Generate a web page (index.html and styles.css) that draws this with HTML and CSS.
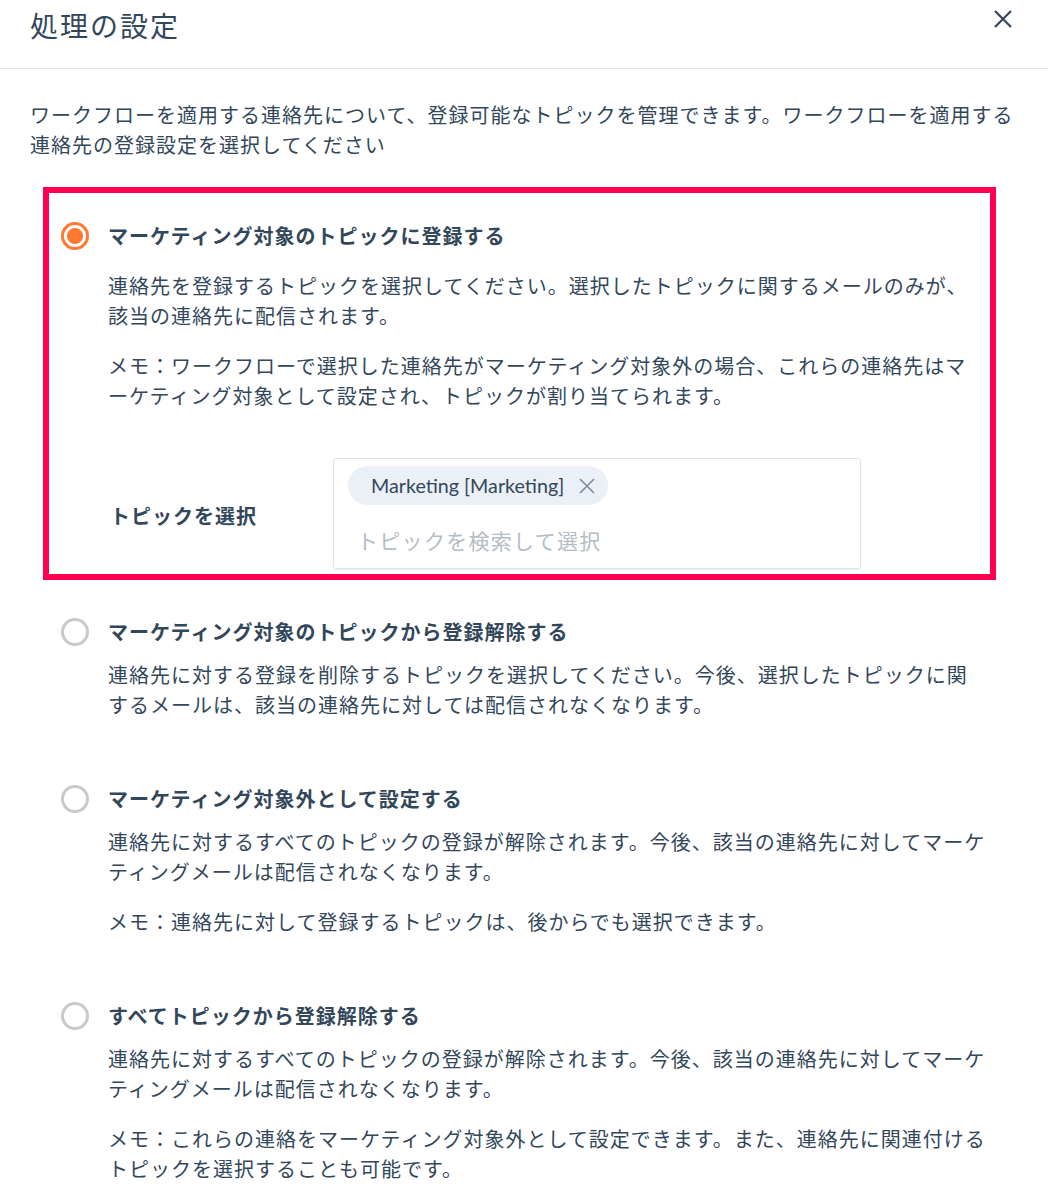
FILE: index.html
```html
<!DOCTYPE html>
<html lang="ja">
<head>
    <meta charset="UTF-8">
    <meta name="viewport" content="width=device-width, initial-scale=1.0">
    <title>処理の設定</title>
    <link rel="stylesheet" href="styles.css">
</head>
<body>
    <header class="panel-header">
        <h1>処理の設定</h1>
        <button class="close-btn" aria-label="閉じる">
            <svg width="20" height="20" viewBox="0 0 20 20">
                <path d="M2 2 L18 18 M18 2 L2 18" stroke="#33475b" stroke-width="2.2" fill="none"/>
            </svg>
        </button>
    </header>

    <main class="panel-body">
        <p class="intro">ワークフローを適用する連絡先について、登録可能なトピックを管理できます。ワークフローを適用する<br>連絡先の登録設定を選択してください</p>

        <div class="option option-selected">
            <div class="option-title">
                <span class="radio checked"></span>
                <span>マーケティング対象のトピックに登録する</span>
            </div>
            <div class="option-text">
                <p>連絡先を登録するトピックを選択してください。選択したトピックに関するメールのみが、<br>該当の連絡先に配信されます。</p>
                <p>メモ：ワークフローで選択した連絡先がマーケティング対象外の場合、これらの連絡先はマ<br>ーケティング対象として設定され、トピックが割り当てられます。</p>
            </div>
            <div class="topic-row">
                <label class="topic-label">トピックを選択</label>
                <div class="topic-input">
                    <span class="tag">
                        Marketing [Marketing]
                        <svg width="18" height="18" viewBox="0 0 18 18">
                            <path d="M2 2 L16 16 M16 2 L2 16" stroke="#7c8a99" stroke-width="1.6" fill="none"/>
                        </svg>
                    </span>
                    <span class="placeholder">トピックを検索して選択</span>
                </div>
            </div>
        </div>

        <div class="option">
            <div class="option-title">
                <span class="radio"></span>
                <span>マーケティング対象のトピックから登録解除する</span>
            </div>
            <div class="option-text">
                <p>連絡先に対する登録を削除するトピックを選択してください。今後、選択したトピックに関<br>するメールは、該当の連絡先に対しては配信されなくなります。</p>
            </div>
        </div>

        <div class="option">
            <div class="option-title">
                <span class="radio"></span>
                <span>マーケティング対象外として設定する</span>
            </div>
            <div class="option-text">
                <p>連絡先に対するすべてのトピックの登録が解除されます。今後、該当の連絡先に対してマーケ<br>ティングメールは配信されなくなります。</p>
                <p>メモ：連絡先に対して登録するトピックは、後からでも選択できます。</p>
            </div>
        </div>

        <div class="option">
            <div class="option-title">
                <span class="radio"></span>
                <span>すべてトピックから登録解除する</span>
            </div>
            <div class="option-text">
                <p>連絡先に対するすべてのトピックの登録が解除されます。今後、該当の連絡先に対してマーケ<br>ティングメールは配信されなくなります。</p>
                <p>メモ：これらの連絡をマーケティング対象外として設定できます。また、連絡先に関連付ける<br>トピックを選択することも可能です。</p>
            </div>
        </div>
    </main>
</body>
</html>
```

FILE: styles.css
```css
body {
    margin: 0;
    font-family: Lato, "Noto Sans CJK JP", sans-serif;
    background-color: #fff;
    color: #33475b;
    font-size: 20px;
    letter-spacing: 1px;
}

p {
    margin: 0;
}

.panel-header {
    display: flex;
    justify-content: space-between;
    align-items: flex-start;
    height: 68px;
    padding: 0 35px 0 30px;
    border-bottom: 1px solid #e7e7e7;
}

.panel-header h1 {
    margin: 6px 0 0;
    font-size: 28px;
    font-weight: 400;
    letter-spacing: 2px;
    line-height: 40px;
}

.close-btn {
    margin-top: 9px;
    padding: 0;
    border: none;
    background: none;
    cursor: pointer;
}

.panel-body {
    padding: 31px 30px 0;
}

.intro {
    line-height: 30px;
    margin-bottom: 27px;
}

.option {
    margin: 0 0 64px 31px;
}

.option:last-child {
    margin-bottom: 0;
}

.option-selected {
    margin: 0 22px 37px 13px;
    border: 6px solid #ff0050;
    padding: 28px 12px 5px;
}

.option-title {
    display: flex;
    align-items: center;
    gap: 19px;
    font-weight: 700;
    line-height: 30px;
}

.radio {
    box-sizing: border-box;
    width: 28px;
    height: 28px;
    border: 3px solid #c9c9c9;
    border-radius: 50%;
    flex-shrink: 0;
}

.radio.checked {
    border-color: #ff7a30;
    background: radial-gradient(circle, #ff7a30 0 7.5px, #fff 8.5px);
}

.option-text {
    margin-top: 13px;
    padding-left: 47px;
    line-height: 30px;
}

.option-selected .option-text {
    margin-top: 20px;
}

.option-text p + p {
    margin-top: 20px;
}

.topic-row {
    display: flex;
    align-items: center;
    margin-top: 47px;
}

.topic-label {
    width: 272px;
    padding: 4px 0 0 49px;
    box-sizing: border-box;
    font-weight: 700;
}

.topic-input {
    width: 528px;
    height: 111px;
    box-sizing: border-box;
    border: 1px solid #dfe3eb;
    border-radius: 3px;
    box-shadow: 0 1px 2px rgba(0, 0, 0, 0.06);
    padding: 7px 14px 0;
}

.tag {
    display: inline-flex;
    align-items: center;
    gap: 14px;
    height: 39px;
    padding: 0 12px 0 23px;
    border-radius: 20px;
    background-color: #eaf0f6;
    font-size: 19.7px;
    letter-spacing: 0;
}

.placeholder {
    display: block;
    margin-top: 21px;
    padding-left: 9px;
    color: #b4bcc5;
    font-size: 21px;
    letter-spacing: 1.3px;
    line-height: 30px;
}
```
